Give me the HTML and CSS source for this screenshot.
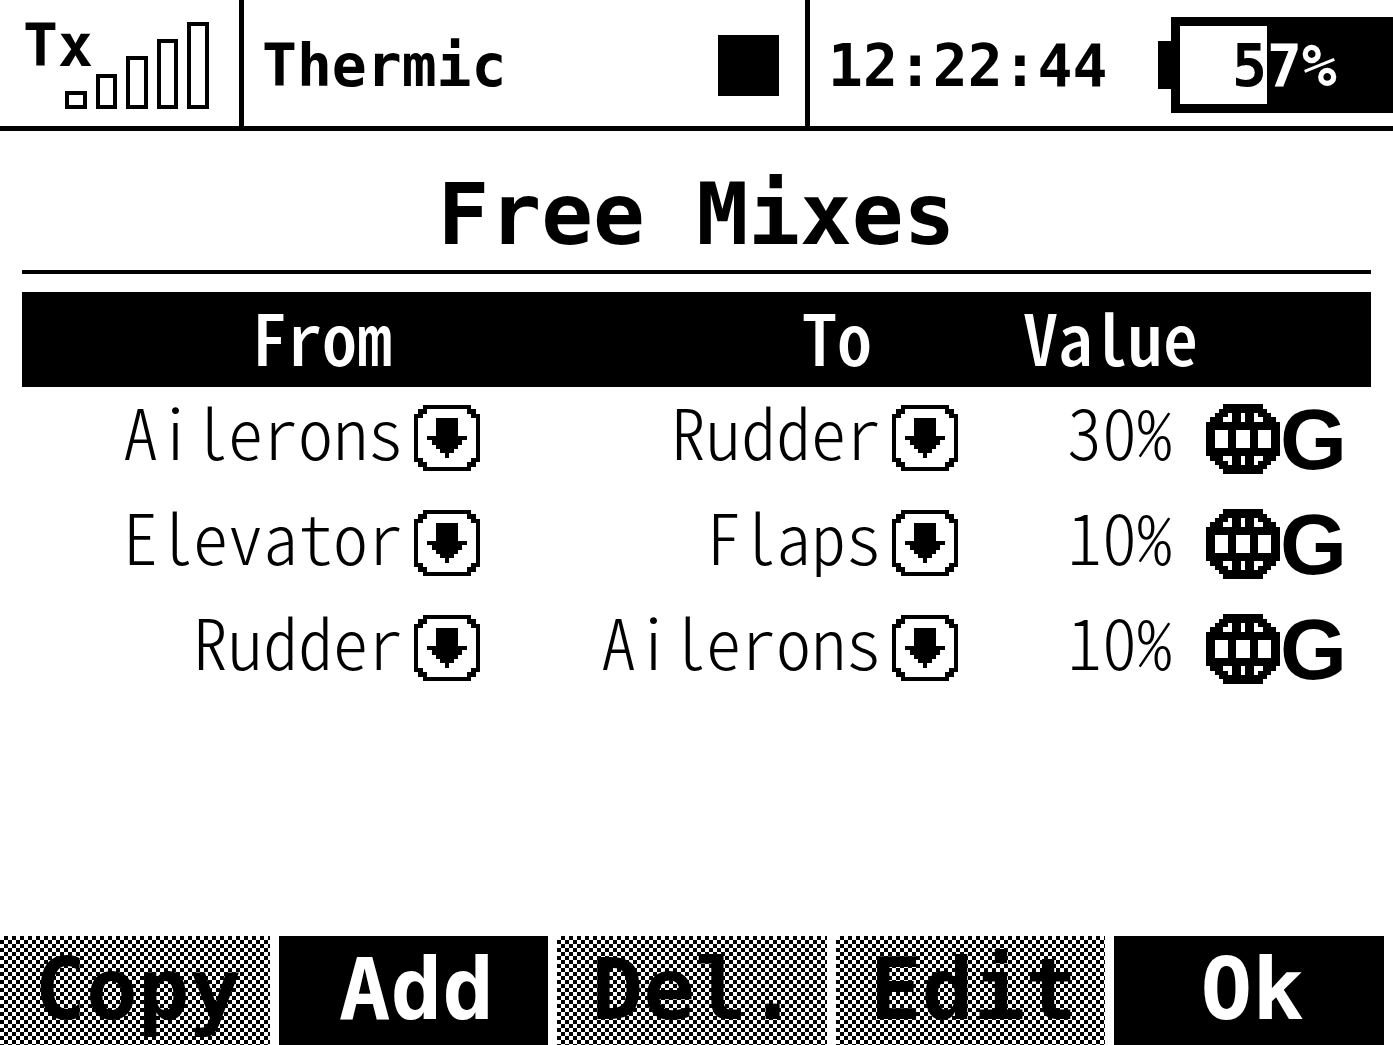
FILE: index.html
```html
<!DOCTYPE html>
<html lang="en">
<head>
  <meta charset="UTF-8">
  <title>Free Mixes</title>
  <link rel="stylesheet" href="styles.css">
</head>
<body>
  <!-- shared icons, one unit = one LCD pixel -->
  <svg class="sprites" aria-hidden="true">
    <symbol id="drop" viewBox="0 0 15 15">
      <path d="M2 0h11v1h1v1h1v11h-1v1h-1v1H2v-1H1v-1H0V2h1V1h1zM3 1v1H2v1H1v9h1v1h1v1h9v-1h1v-1h1V3h-1V2h-1V1z" fill-rule="evenodd"/>
      <path d="M5 3h5v4h2v1h-1v1h-1v1H9v1H8v1H7v-1H6v-1H5V9H4V8H3V7h2z"/>
    </symbol>
    <symbol id="globe" viewBox="0 0 17 16">
      <path fill-rule="evenodd" d="M4 0h9v1h1v1h1v1h1v1h1v8h-1v1h-1v1h-1v1h-1v1H4v-1H3v-1H2v-1H1v-1H0V4h1V3h1V2h1V1h1z
        M5 2v1H4v1h2V2z M8 2v2h1V2z M11 2v2h2V3h-1V2z
        M2 6v4h3V6z M7 6v4h3V6z M12 6v4h3V6z
        M4 12v1h1v1h1v-2z M8 12v2h1v-2z M11 12v2h1v-1h1v-1z"/>
    </symbol>
  </svg>

  <header class="status">
    <div class="signal">
      <span class="tx">Tx</span>
      <svg class="bars" viewBox="0 0 144 87">
        <path d="M2 71h18v14H2zM33 54h17v31H33zM63 36h18v49H63zM94 19h17v66H94zM124 2h18v83h-18z"/>
      </svg>
    </div>
    <div class="model">
      <span>Thermic</span>
      <span class="stop"></span>
    </div>
    <div class="clock">
      <time>12:22:44</time>
      <div class="battery">
        <div class="level"><span>57%</span></div>
      </div>
    </div>
  </header>

  <main>
    <h1>Free Mixes</h1>
    <table class="mixes">
      <thead>
        <tr>
          <th class="from">From</th>
          <th class="to">To</th>
          <th class="value">Value</th>
          <th class="scope"></th>
        </tr>
      </thead>
      <tbody>
        <tr>
          <td><div class="pick"><select aria-label="From 1"><option>Ailerons</option></select><svg><use href="#drop"/></svg></div></td>
          <td><div class="pick"><select aria-label="To 1"><option>Rudder</option></select><svg><use href="#drop"/></svg></div></td>
          <td class="num">30%</td>
          <td class="flags"><div class="global"><svg><use href="#globe"/></svg><b>G</b></div></td>
        </tr>
        <tr>
          <td><div class="pick"><select aria-label="From 2"><option>Elevator</option></select><svg><use href="#drop"/></svg></div></td>
          <td><div class="pick"><select aria-label="To 2"><option>Flaps</option></select><svg><use href="#drop"/></svg></div></td>
          <td class="num">10%</td>
          <td class="flags"><div class="global"><svg><use href="#globe"/></svg><b>G</b></div></td>
        </tr>
        <tr>
          <td><div class="pick"><select aria-label="From 3"><option>Rudder</option></select><svg><use href="#drop"/></svg></div></td>
          <td><div class="pick"><select aria-label="To 3"><option>Ailerons</option></select><svg><use href="#drop"/></svg></div></td>
          <td class="num">10%</td>
          <td class="flags"><div class="global"><svg><use href="#globe"/></svg><b>G</b></div></td>
        </tr>
      </tbody>
    </table>
  </main>

  <footer class="keys">
    <button disabled>Copy</button>
    <button>Add</button>
    <button disabled>Del.</button>
    <button disabled>Edit</button>
    <button>Ok</button>
  </footer>
</body>
</html>
```

FILE: styles.css
```css
* {
  box-sizing: border-box;
}
body {
  margin: 0;
  min-height: 100vh;
  display: flex;
  flex-direction: column;
  background: #fff;
  color: #000;
  font-family: "DejaVu Sans Mono", monospace;
}
svg {
  display: block;
  shape-rendering: crispEdges;
}
.sprites {
  position: absolute;
  width: 0;
  height: 0;
}

/* status bar */
.status {
  display: grid;
  grid-template-columns: 244px 1fr 588px;
  height: 131px;
  border-bottom: 5px solid #000;
  font-size: 58px;
  font-weight: bold;
  line-height: 68px;
}
.signal {
  display: grid;
  padding: 12px 0 0 23px;
  border-right: 5px solid #000;
}
.signal > * {
  grid-area: 1 / 1;
}
.bars {
  width: 144px;
  height: 87px;
  margin: 10px 0 0 42px;
  fill: none;
  stroke: #000;
  stroke-width: 4;
}
.model {
  display: flex;
  align-items: center;
  justify-content: space-between;
  padding: 5px 26px 0 18px;
}
.stop {
  width: 61px;
  height: 61px;
  background: #000;
}
.clock {
  display: flex;
  align-items: center;
  justify-content: space-between;
  padding: 5px 0 0 18px;
  border-left: 5px solid #000;
}
.battery {
  display: flex;
  align-items: center;
  margin-bottom: 1px;
}
.battery::before {
  content: "";
  width: 13px;
  height: 48px;
  background: #000;
}
.level {
  width: 222px;
  height: 96px;
  padding: 6px 0 0 52px;
  border: solid #000;
  border-width: 9px 0 9px 9px;
  background: linear-gradient(90deg, #fff 87px, #000 87px);
}
.level span {
  display: block;
  color: #fff;
  mix-blend-mode: difference;
}

/* mix list */
main {
  flex: 1;
  padding: 0 22px;
}
h1 {
  margin: 0 0 18px;
  padding: 40px 0 0;
  height: 143px;
  border-bottom: 4px solid #000;
  font-size: 86px;
  line-height: 86px;
  text-align: center;
}
.mixes {
  width: 100%;
  table-layout: fixed;
  border-collapse: collapse;
  font-family: "Noto Sans CJK JP", monospace;
  font-feature-settings: "hwid";
  font-size: 70px;
  font-weight: 300;
  line-height: 85px;
}
.mixes th {
  height: 95px;
  padding: 0 0 8px;
  background: #000;
  color: #fff;
  font-weight: 500;
  text-align: right;
}
.mixes td {
  height: 105px;
  padding: 0 0 20px;
}
.mixes .from {
  width: 458px;
  padding-right: 88px;
}
.mixes .to {
  padding-right: 86px;
}
.mixes .value {
  width: 240px;
}
.mixes .scope {
  width: 173px;
}
.mixes .num {
  padding-right: 26px;
  text-align: right;
}
.mixes .flags {
  padding-bottom: 2px;
}
.pick {
  position: relative;
}
.pick select {
  display: block;
  width: 100%;
  padding: 0 77px 0 0;
  border: 0;
  border-radius: 0;
  appearance: none;
  background: none;
  color: inherit;
  font: inherit;
  font-feature-settings: inherit;
  text-align: right;
  text-align-last: right;
}
.pick svg {
  position: absolute;
  right: 0;
  top: 18px;
  width: 66px;
  height: 66px;
  pointer-events: none;
}
.global {
  display: flex;
  align-items: center;
  padding-left: 8px;
}
.global svg {
  flex: none;
  width: 74px;
  height: 70px;
}
.global b {
  font: bold 86px/88px "Liberation Sans", sans-serif;
}

/* soft keys */
.keys {
  display: grid;
  grid-template-columns: repeat(5, 1fr);
  gap: 9px;
  padding-right: 9px;
}
.keys button {
  height: 109px;
  padding: 0 0 2px 6px;
  border: 0;
  background: #000;
  color: #fff;
  font: bold 86px/107px "DejaVu Sans Mono", monospace;
}
.keys button:disabled {
  background: repeating-conic-gradient(#000 0 25%, #fff 0 50%) 0 0 / 8px 8px;
  color: #000;
}
```
